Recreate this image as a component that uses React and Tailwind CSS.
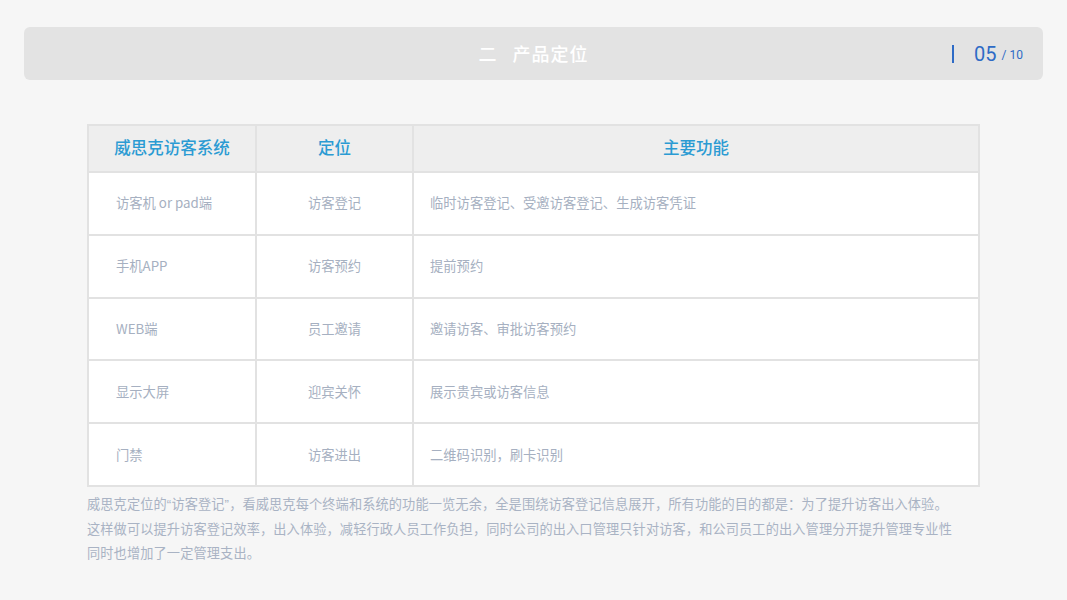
const rows = [
  ['访客机 or pad端', '访客登记', '临时访客登记、受邀访客登记、生成访客凭证'],
  ['手机APP', '访客预约', '提前预约'],
  ['WEB端', '员工邀请', '邀请访客、审批访客预约'],
  ['显示大屏', '迎宾关怀', '展示贵宾或访客信息'],
  ['门禁', '访客进出', '二维码识别，刷卡识别'],
];

const font = { fontFamily: '"Noto Sans CJK SC", "Noto Sans", sans-serif' };
const latin = { fontFamily: '"Liberation Sans", sans-serif' };

export default function App() {
  return (
    <div className="w-[1067px] h-[600px] bg-[#f6f6f6] overflow-hidden" style={font}>
      <div className="pt-[27px] px-6">
        <div className="relative h-[53px] rounded-md bg-[#e3e3e3] flex items-center justify-center">
          <div className="text-white text-[18px] font-medium tracking-[1px]">二&nbsp;&nbsp;&nbsp;产品定位</div>
          <div className="absolute right-[20px] top-0 h-full flex items-center">
            <div className="w-[2px] h-[18px] bg-[#2e6bc6] mr-[20px]" />
            <span className="text-[#2e6bc6] text-[20px] leading-none" style={{ fontFamily: 'Roboto, "Liberation Sans", sans-serif' }}>05</span>
            <span className="text-[#2e6bc6] text-[12px] leading-none ml-[5px] mt-[3px]" style={{ fontFamily: 'Roboto, "Liberation Sans", sans-serif' }}>/ 10</span>
          </div>
        </div>
      </div>

      <div className="ml-[87px] mt-[44px] w-[893px]">
        <table className="w-full border-collapse border-2 border-[#e2e2e2] table-fixed">
          <colgroup>
            <col className="w-[168px]" />
            <col className="w-[157px]" />
            <col />
          </colgroup>
          <thead>
            <tr className="h-[47px] bg-[#eeeeee]">
              <th className="border-2 border-[#e2e2e2] text-[#2b9bd3] text-[16.5px] font-medium text-center pb-[3px]">威思克访客系统</th>
              <th className="border-2 border-[#e2e2e2] text-[#2b9bd3] text-[16.5px] font-medium text-center pb-[3px]">定位</th>
              <th className="border-2 border-[#e2e2e2] text-[#2b9bd3] text-[16.5px] font-medium text-center pb-[3px]">主要功能</th>
            </tr>
          </thead>
          <tbody>
            {rows.map((r) => (
              <tr key={r[0]} className="h-[62.8px] bg-white">
                <td className="border-2 border-[#e2e2e2] text-[#a6b0c1] text-[13.3px] pl-[27px]">{r[0]}</td>
                <td className="border-2 border-[#e2e2e2] text-[#a6b0c1] text-[13.3px] text-center">{r[1]}</td>
                <td className="border-2 border-[#e2e2e2] text-[#a6b0c1] text-[13.3px] pl-[16px]">{r[2]}</td>
              </tr>
            ))}
          </tbody>
        </table>
        <p className="mt-[5px] text-[13.2px] leading-[24px] tracking-[0.12px] text-[#a9b3c4] whitespace-nowrap">
          威思克定位的<span style={latin}>“</span>访客登记<span style={latin}>”</span>，看威思克每个终端和系统的功能一览无余，全是围绕访客登记信息展开，所有功能的目的都是：为了提升访客出入体验。
          <br />
          这样做可以提升访客登记效率，出入体验，减轻行政人员工作负担，同时公司的出入口管理只针对访客，和公司员工的出入管理分开提升管理专业性
          <br />
          同时也增加了一定管理支出。
        </p>
      </div>
    </div>
  );
}
